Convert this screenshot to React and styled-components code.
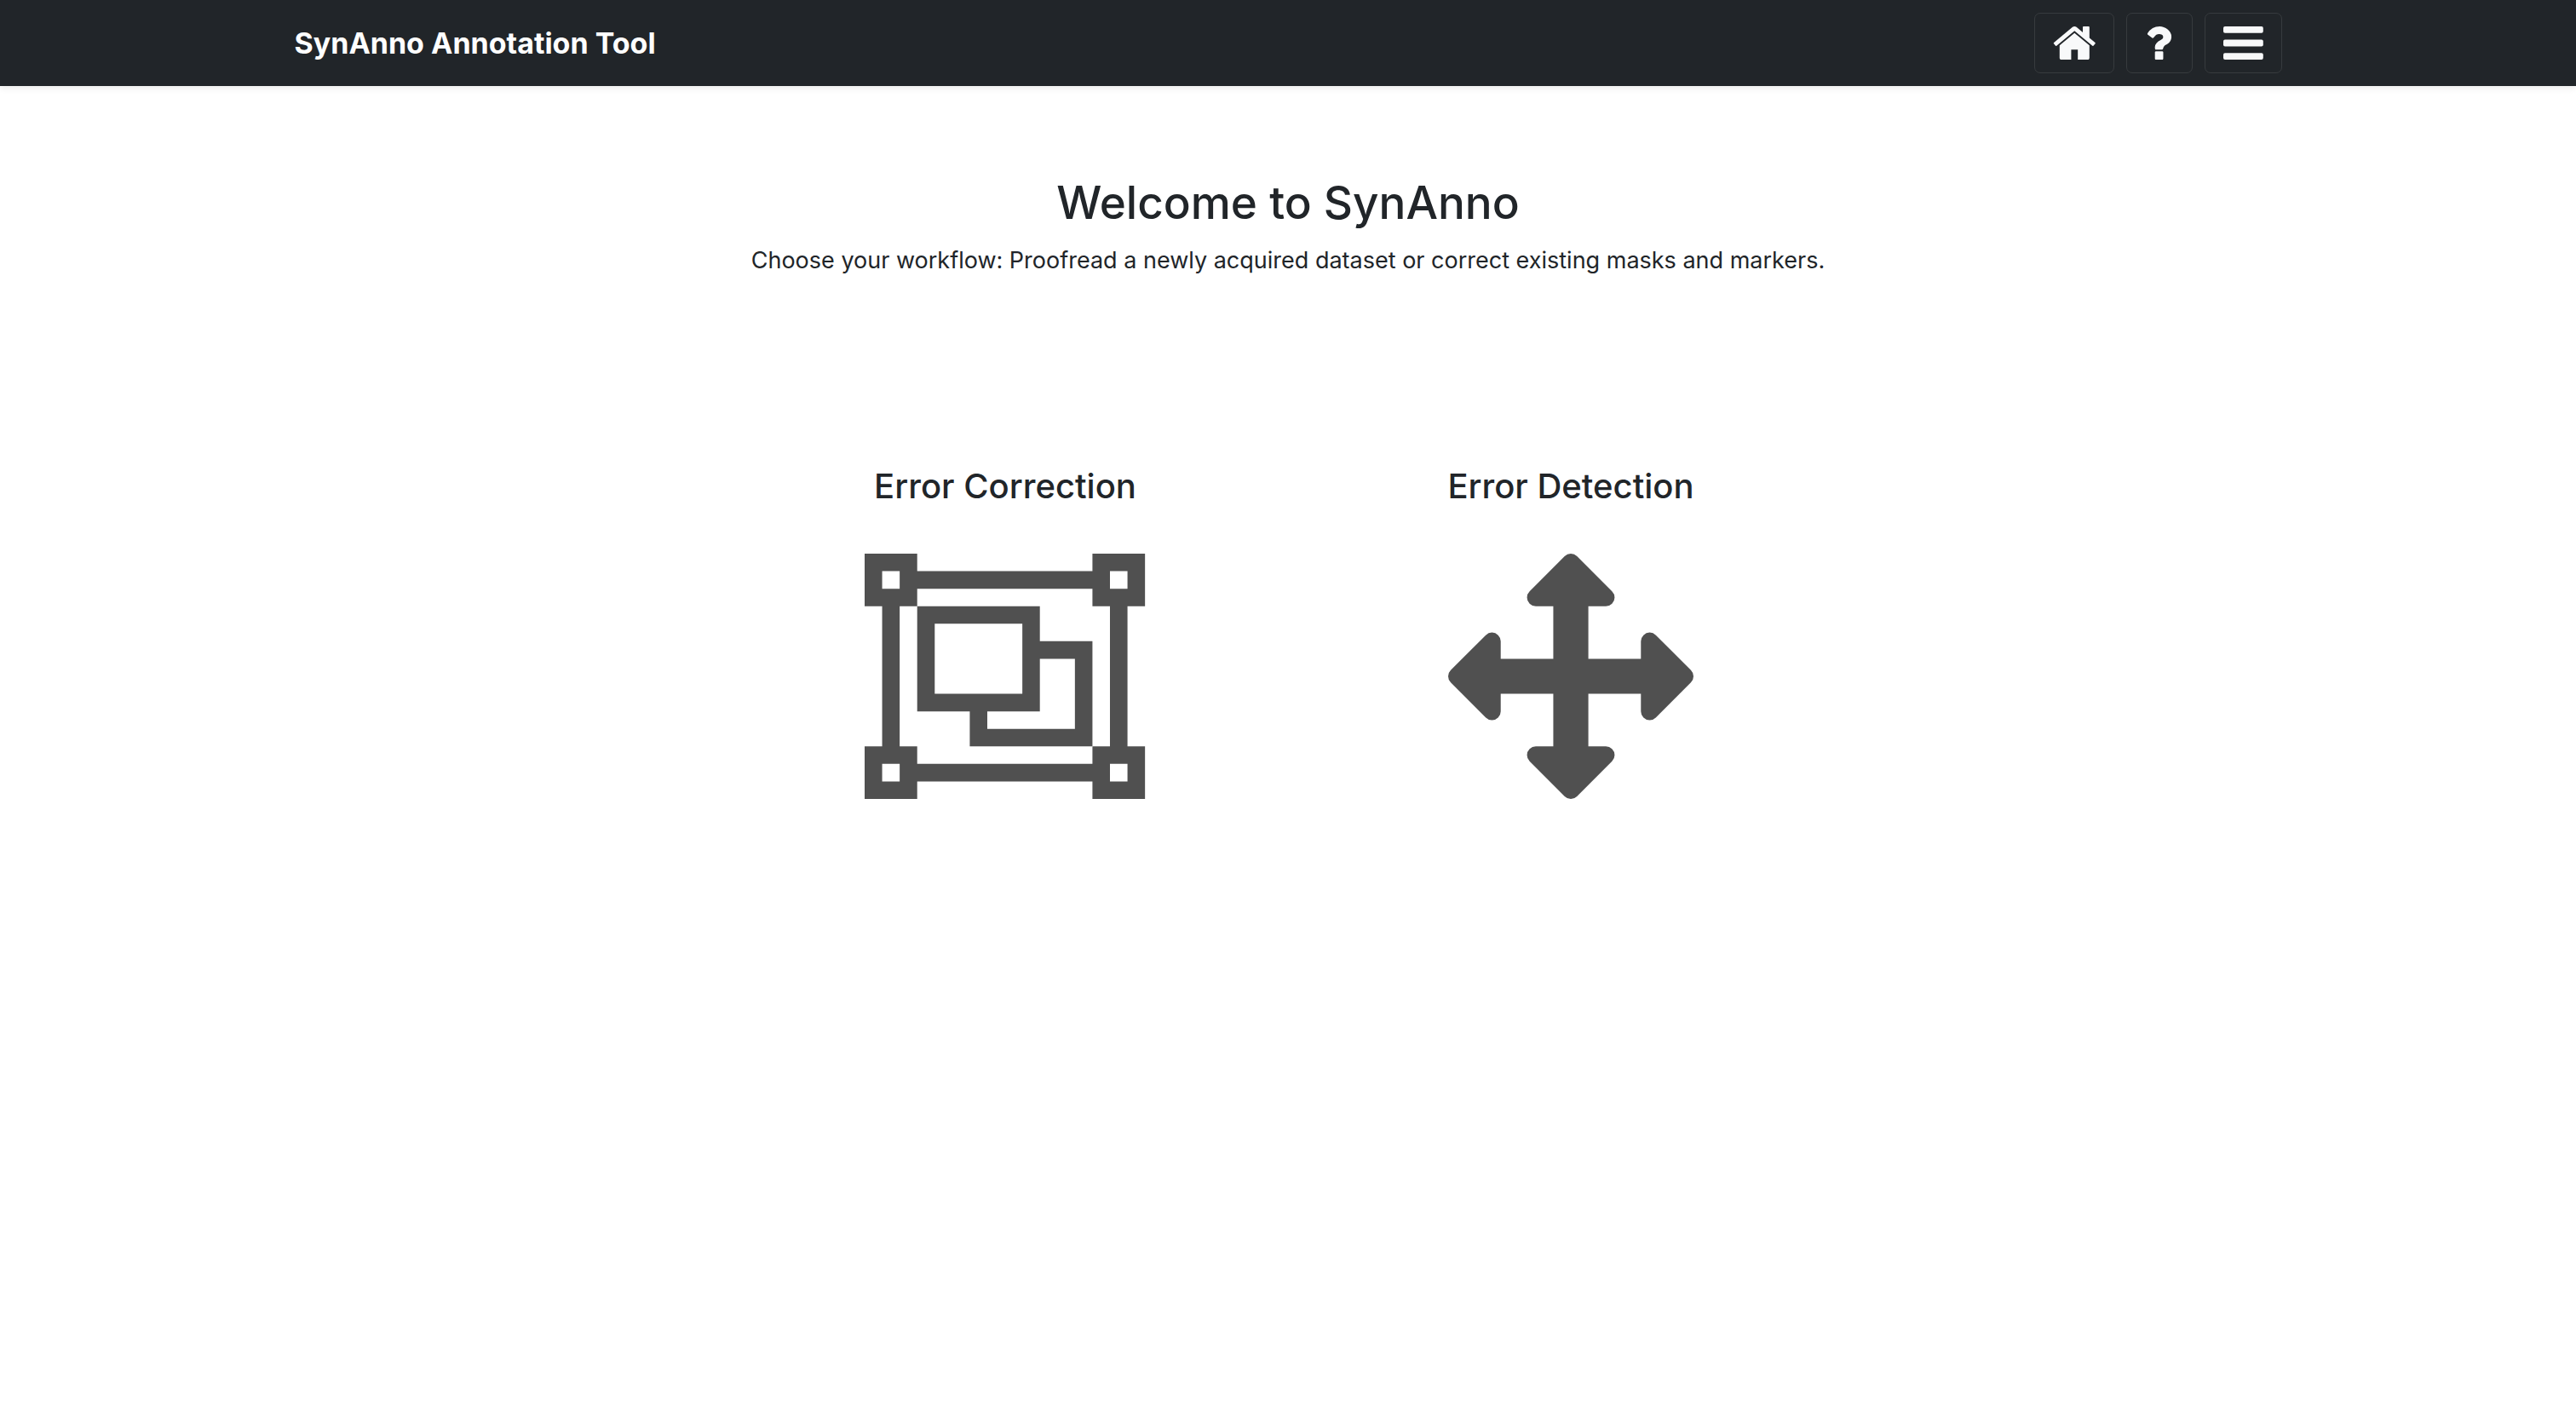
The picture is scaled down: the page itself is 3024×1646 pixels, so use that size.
import React from "react";
import styled, { createGlobalStyle } from "styled-components";

const GlobalStyle = createGlobalStyle`
  *, *::before, *::after { box-sizing: border-box; }
  body {
    margin: 0;
    background: #fff;
    color: #212529;
    font-family: Inter, "Liberation Sans", sans-serif;
  }
  h1, h2, p { margin: 0; }
`;

const Navbar = styled.header`
  background: #212529;
  box-shadow: 0 3px 7px rgba(0, 0, 0, 0.075);
`;

const NavInner = styled.nav`
  display: flex;
  align-items: center;
  justify-content: space-between;
  max-width: 2333px;
  margin: 0 auto;
  padding: 15px 0;
`;

const Brand = styled.a`
  color: #fff;
  font-size: 34px;
  font-weight: 700;
  line-height: 44px;
  text-decoration: none;
`;

const NavActions = styled.div`
  display: flex;
  gap: 14px;
`;

const NavButton = styled.button`
  display: flex;
  align-items: center;
  padding: 15px 21px;
  border: 1px solid #373b3e;
  border-radius: 7px;
  background: transparent;
  color: #f8f9fa;
  cursor: pointer;
`;

const Glyph = styled.svg`
  display: block;
  height: ${(p) => p.$height}px;
  width: auto;
  fill: currentColor;
`;

const Main = styled.main`
  display: flex;
  flex-direction: column;
  align-items: center;
  padding: 104px 20px 0;
  text-align: center;
`;

const Title = styled.h1`
  font-size: 53px;
  font-weight: 500;
  line-height: 66px;
`;

const Lead = styled.p`
  padding-top: 14px;
  font-size: 27px;
  line-height: 42px;
`;

const Workflows = styled.div`
  display: grid;
  grid-template-columns: repeat(2, 1fr);
  width: 100%;
  max-width: 1328px;
  padding-top: 217px;
`;

const Workflow = styled.a`
  display: flex;
  flex-direction: column;
  align-items: center;
  gap: 52px;
  color: inherit;
  text-decoration: none;
`;

const WorkflowTitle = styled.h2`
  font-size: 40px;
  font-weight: 500;
  line-height: 54px;
`;

const WorkflowArt = styled.span`
  color: #505050;
`;

const HomeIcon = () => (
  <Glyph $height={39} viewBox="64 253 1664 1283" aria-hidden="true">
    <path d="M1472 992v480q0 26-19 45t-45 19h-384v-384h-256v384h-384q-26 0-45-19t-19-45v-480q0-1 .5-3t.5-3l575-474 575 474q1 2 1 6zm223-69l-62 74q-8 9-21 11h-3q-13 0-21-7l-692-577-692 577q-12 8-24 7-13-2-21-11l-62-74q-8-10-7-23.5t11-21.5l719-599q32-26 76-26t76 26l244 204v-195q0-14 9-23t23-9h192q14 0 23 9t9 23v408l219 182q10 8 11 21.5t-7 23.5z" />
  </Glyph>
);

const QuestionIcon = () => (
  <Glyph $height={39} viewBox="384 256 1100 1280" aria-hidden="true">
    <path d="M1088 1256v240q0 16-12 28t-28 12h-240q-16 0-28-12t-12-28v-240q0-16 12-28t28-12h240q16 0 28 12t12 28zm316-600q0 54-15.5 101t-35 76.5-55 59.5-57.5 43.5-61 35.5q-41 23-68.5 65t-27.5 67q0 17-12 32.5t-28 15.5h-240q-15 0-25.5-18.5t-10.5-37.5v-45q0-83 65-156.5t143-108.5q59-27 84-56t25-76q0-42-46.5-74t-107.5-32q-65 0-108 29-35 25-107 115-13 16-31 16-12 0-25-8l-164-125q-13-10-15.5-25t5.5-28q160-266 464-266 80 0 161 31t146 83 106 127.5 41 158.5z" />
  </Glyph>
);

const MenuIcon = () => (
  <Glyph $height={39} viewBox="0 0 1536 1280" aria-hidden="true">
    <rect width="1536" height="256" rx="64" />
    <rect y="512" width="1536" height="256" rx="64" />
    <rect y="1024" width="1536" height="256" rx="64" />
  </Glyph>
);

const ObjectGroupIcon = () => (
  <Glyph $height={288} viewBox="0 0 16 14" aria-hidden="true">
    <path
      fillRule="evenodd"
      d="M0 0h3v1h10v-1h3v3h-1v8h1v3h-3v-1h-10v1h-3v-3h1v-8h-1zM1 1v1h1v-1zM14 1v1h1v-1zM1 12v1h1v-1zM14 12v1h1v-1zM3 2v1h-1v8h1v1h10v-1h1v-8h-1v-1z"
    />
    <path
      fillRule="evenodd"
      d="M3 3h7v2h3v6h-7v-2h-3zM4 4v4h5v-4zM10 6v3h-3v1h5v-4z"
    />
  </Glyph>
);

const ArrowsIcon = () => (
  <Glyph $height={288} viewBox="0 0 1792 1792" aria-hidden="true">
    <path d="M1792 896q0 26-19 45l-256 256q-19 19-45 19t-45-19-19-45v-128h-384v384h128q26 0 45 19t19 45-19 45l-256 256q-19 19-45 19t-45-19l-256-256q-19-19-19-45t19-45 45-19h128v-384h-384v128q0 26-19 45t-45 19-45-19l-256-256q-19-19-19-45t19-45l256-256q19-19 45-19t45 19 19 45v128h384v-384h-128q-26 0-45-19t-19-45 19-45l256-256q19-19 45-19t45 19l256 256q19 19 19 45t-19 45-45 19h-128v384h384v-128q0-26 19-45t45-19 45 19l256 256q19 19 19 45z" />
  </Glyph>
);

export default function App() {
  return (
    <>
      <GlobalStyle />
      <Navbar>
        <NavInner>
          <Brand href="#">SynAnno Annotation Tool</Brand>
          <NavActions>
            <NavButton as="a" href="#" aria-label="Home">
              <HomeIcon />
            </NavButton>
            <NavButton type="button" aria-label="Help">
              <QuestionIcon />
            </NavButton>
            <NavButton type="button" aria-label="Menu">
              <MenuIcon />
            </NavButton>
          </NavActions>
        </NavInner>
      </Navbar>
      <Main>
        <Title>Welcome to SynAnno</Title>
        <Lead>
          Choose your workflow: Proofread a newly acquired dataset or correct
          existing masks and markers.
        </Lead>
        <Workflows>
          <Workflow href="#correction">
            <WorkflowTitle>Error Correction</WorkflowTitle>
            <WorkflowArt>
              <ObjectGroupIcon />
            </WorkflowArt>
          </Workflow>
          <Workflow href="#detection">
            <WorkflowTitle>Error Detection</WorkflowTitle>
            <WorkflowArt>
              <ArrowsIcon />
            </WorkflowArt>
          </Workflow>
        </Workflows>
      </Main>
    </>
  );
}
